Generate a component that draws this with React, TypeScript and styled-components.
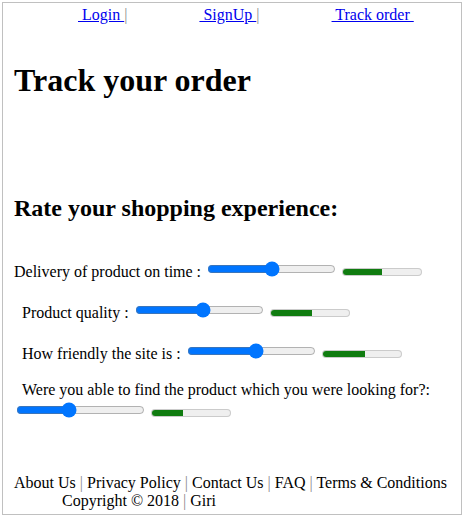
import React from "react";
import styled, { createGlobalStyle } from "styled-components";

const GlobalStyle = createGlobalStyle`
  html, body { margin: 0; padding: 0; background: #fff; }
  body {
    font-family: "Liberation Serif", "Times New Roman", serif;
    font-size: 16px;
    color: #000;
  }
`;

const Page = styled.div`
  margin: 2px;
  width: 460px;
  height: 513px;
  box-sizing: border-box;
  border: 1px solid #c0c0c0;
  padding: 3px 11px 4px 11px;
  display: flex;
  flex-direction: column;
`;

const Nav = styled.nav`
  display: flex;
  gap: 72px;
  padding-left: 64px;
  line-height: 18px;
`;

const NavItem = styled.span`
  white-space: pre;
`;

const NavLink = styled.a`
  color: #0000ee;
  text-decoration: underline;
  cursor: pointer;
`;

const Pipe = styled.span`
  color: #8a8a8a;
`;

const Title = styled.h1`
  font-size: 32px;
  font-weight: bold;
  margin: 38px 0 0;
`;

const SubTitle = styled.h2`
  font-size: 24px;
  font-weight: bold;
  margin: 96px 0 0;
`;

const Row = styled.div<{ $indent: number; $top: number }>`
  margin-top: ${(p) => p.$top}px;
  text-indent: ${(p) => p.$indent}px;
  line-height: 20px;
`;

const Slider = styled.input`
  text-indent: 0;
`;

const Meter = styled.meter`
  text-indent: 0;
`;

const Footer = styled.footer`
  margin-top: auto;
`;

const FooterLine = styled.div<{ $indent?: number }>`
  padding-left: ${(p) => p.$indent ?? 0}px;
`;

const questions = [
  { label: "Delivery of product on time :", value: 50, indent: 0, top: 37 },
  { label: "Product quality :", value: 53, indent: 8, top: 18 },
  { label: "How friendly the site is :", value: 54, indent: 8, top: 18 },
  {
    label: "Were you able to find the product which you were looking for?:",
    value: 40,
    indent: 8,
    top: 16,
  },
];

const footerLinks = ["About Us", "Privacy Policy", "Contact Us", "FAQ", "Terms & Conditions"];

export default function App() {
  return (
    <>
      <GlobalStyle />
      <Page>
        <Nav>
          <NavItem>
            <NavLink> Login </NavLink>
            <Pipe>|</Pipe>
          </NavItem>
          <NavItem>
            <NavLink> SignUp </NavLink>
            <Pipe>|</Pipe>
          </NavItem>
          <NavItem>
            <NavLink> Track order </NavLink>
          </NavItem>
        </Nav>
        <Title>Track your order</Title>
        <SubTitle>Rate your shopping experience:</SubTitle>
        {questions.map((q) => (
          <Row key={q.label} $indent={q.indent} $top={q.top}>
            {q.label}{" "}
            <Slider type="range" min={0} max={100} defaultValue={q.value} />{" "}
            <Meter value={q.value / 100} />
          </Row>
        ))}
        <Footer>
          <FooterLine>
            {footerLinks.map((l, i) => (
              <React.Fragment key={l}>
                {i > 0 && <Pipe> | </Pipe>}
                {l}
              </React.Fragment>
            ))}
          </FooterLine>
          <FooterLine $indent={48}>
            Copyright © 2018 <Pipe>|</Pipe> Giri
          </FooterLine>
        </Footer>
      </Page>
    </>
  );
}
